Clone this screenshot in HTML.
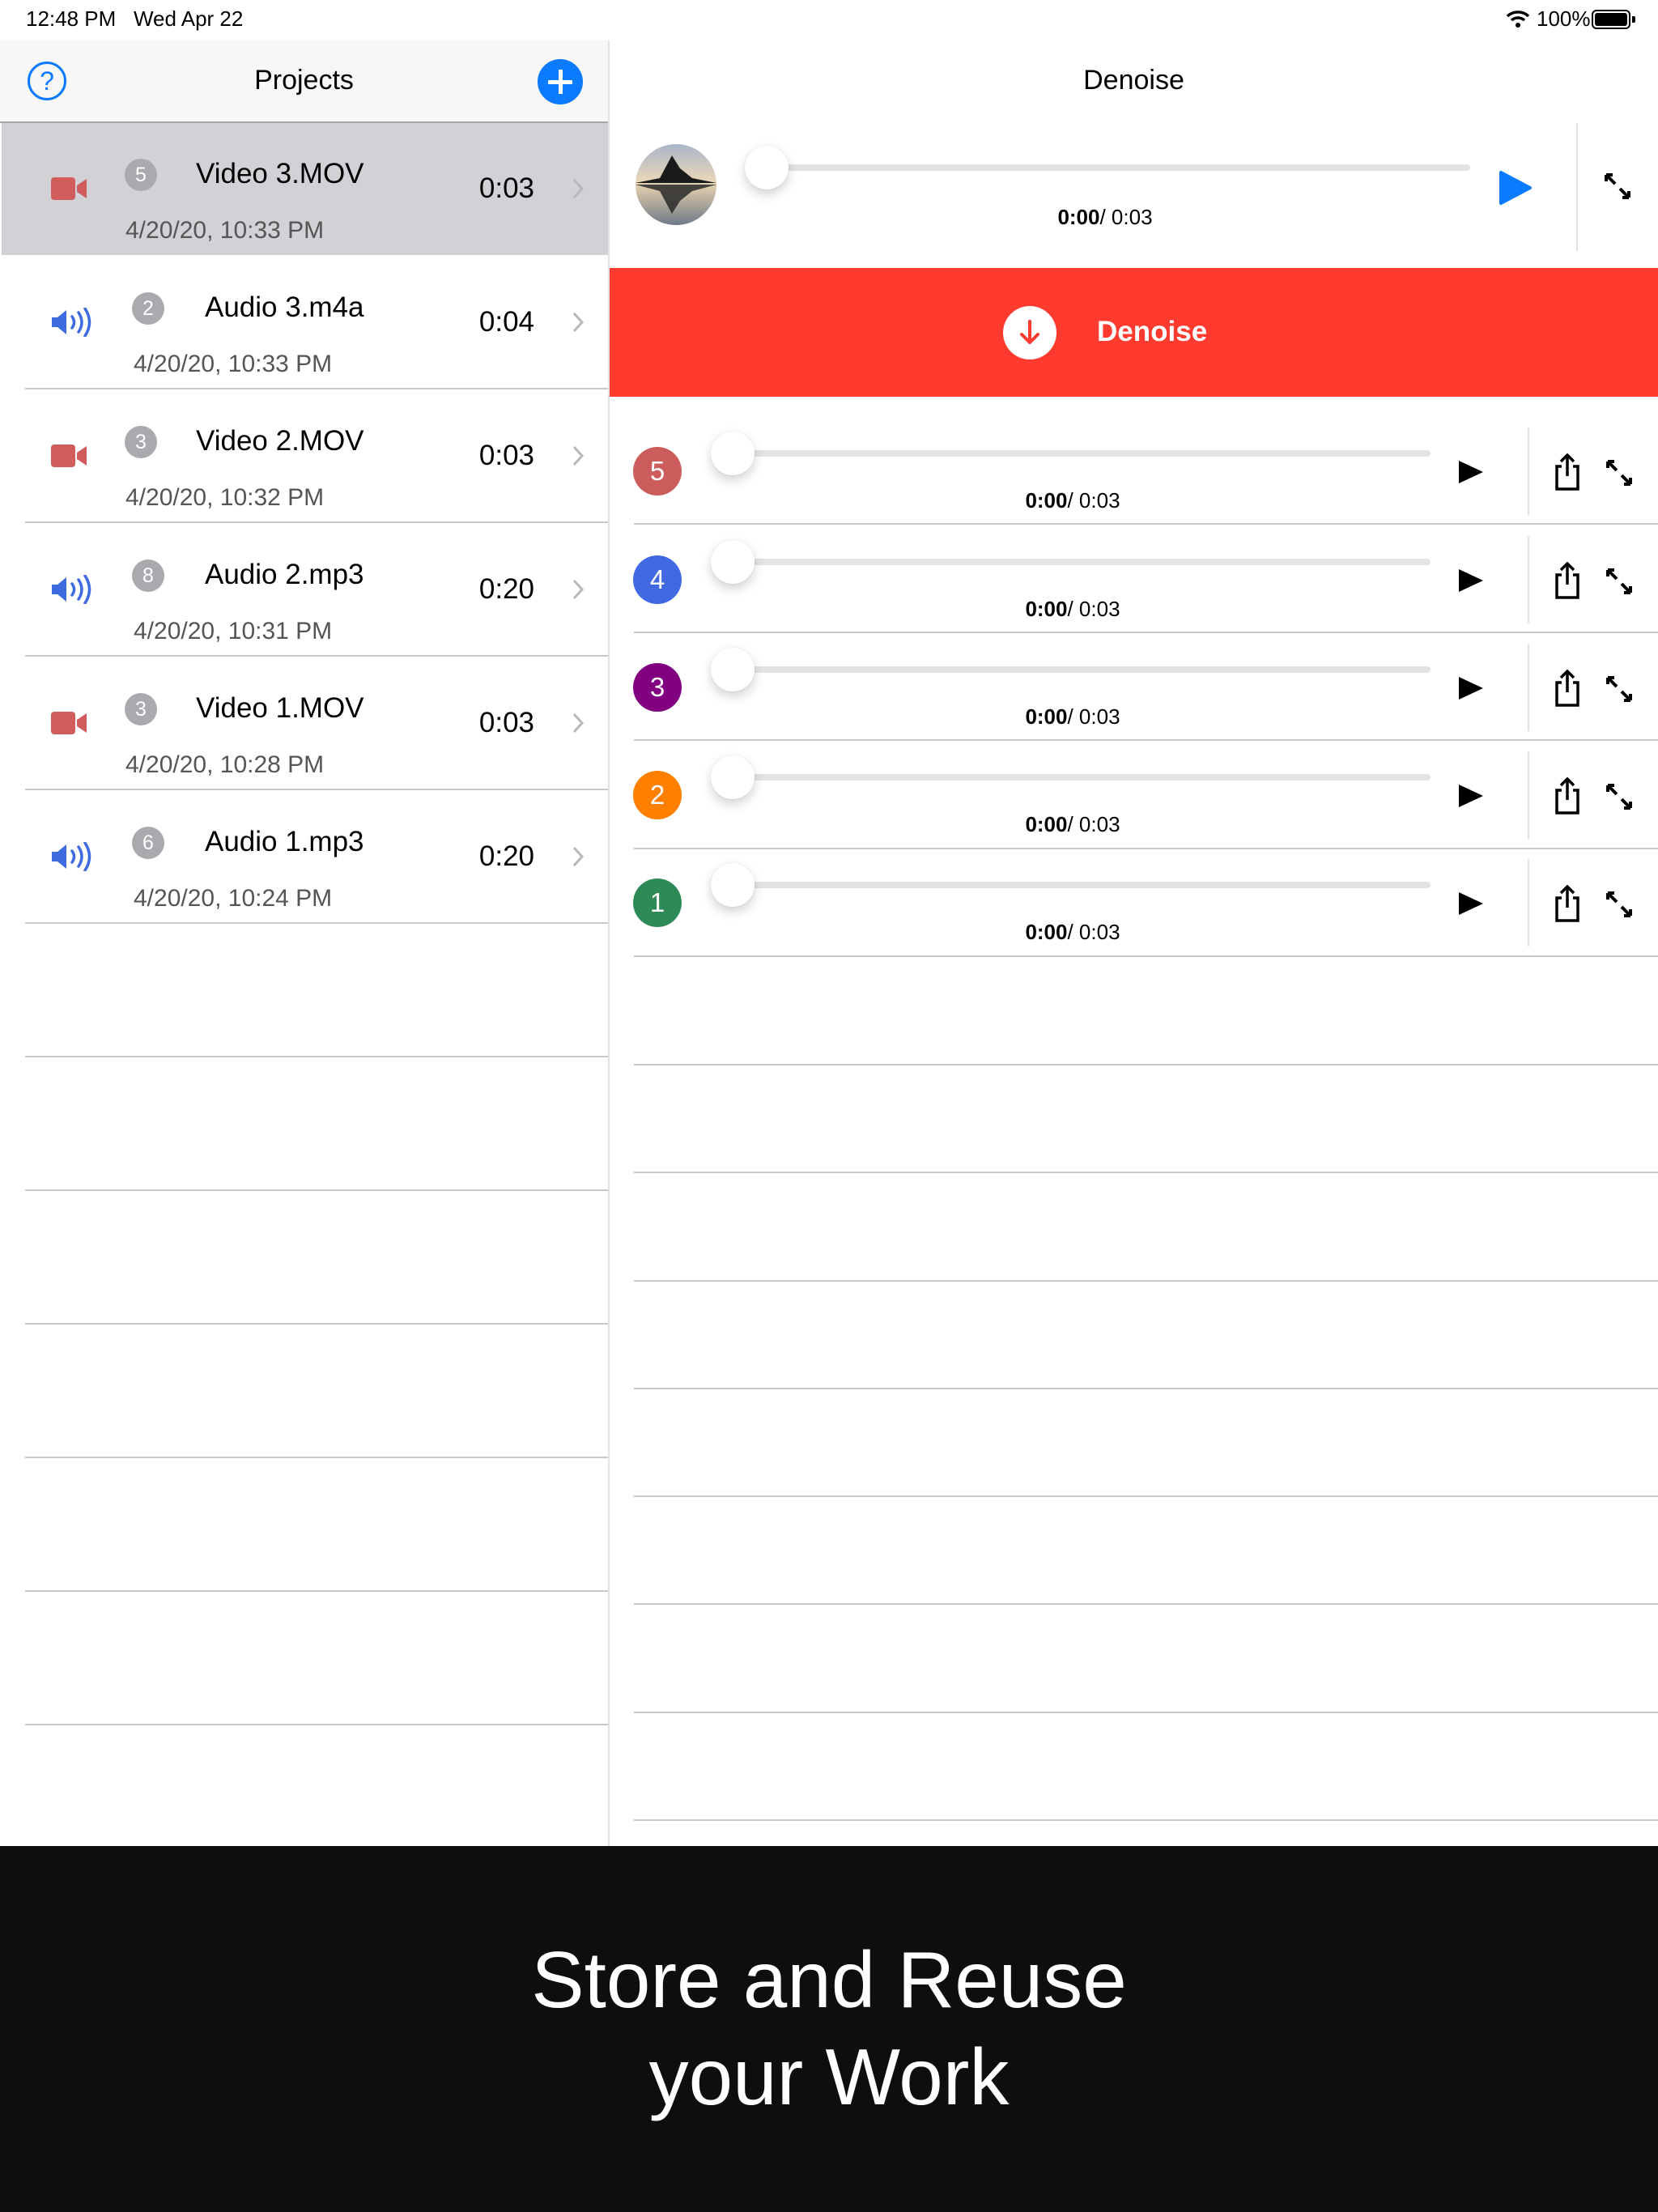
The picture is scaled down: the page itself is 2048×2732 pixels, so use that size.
<!DOCTYPE html>
<html><head><meta charset="utf-8"><style>
*{margin:0;padding:0;box-sizing:border-box}
body{width:2048px;height:2732px;position:relative;background:#fff;font-family:"Liberation Sans",sans-serif;overflow:hidden;color:#000}
.a{position:absolute}
.sep{position:absolute;height:2px;background:#c8c8cc}
.t{position:absolute;white-space:nowrap}
.badge{position:absolute;width:40px;height:40px;border-radius:50%;background:#a9a9ae;color:#fff;font-size:25px;text-align:center;line-height:40px}
.num{position:absolute;width:60px;height:60px;border-radius:50%;color:#fff;font-size:33px;text-align:center;line-height:60px}
.track{position:absolute;height:8px;background:#e3e3e6;border-radius:4px}
.knob{position:absolute;width:54px;height:54px;border-radius:50%;background:#fff;box-shadow:0 6px 14px rgba(0,0,0,.18),0 0 2px rgba(0,0,0,.08)}
</style></head><body>

<div class="t" style="left:32px;top:8px;font-size:26px">12:48 PM&nbsp;&nbsp;&nbsp;Wed Apr 22</div>
<div class="t" style="left:1898px;top:8px;font-size:26px">100%</div>
<svg class="a" style="left:1860px;top:12px" width="30" height="22" viewBox="0 0 30 22"><path d="M2 8 A19 19 0 0 1 28 8" stroke="#000" stroke-width="3.5" fill="none"/><path d="M7 13 A12 12 0 0 1 23 13" stroke="#000" stroke-width="3.5" fill="none"/><circle cx="15" cy="19" r="3" fill="#000"/></svg>
<div class="a" style="left:1966px;top:12px;width:48px;height:24px;border:2px solid #000;border-radius:6px;padding:2px"><div style="width:100%;height:100%;background:#000;border-radius:3px"></div></div>
<div class="a" style="left:2016px;top:20px;width:4px;height:8px;background:#000;border-radius:0 2px 2px 0"></div>

<div class="a" style="left:0;top:50px;width:751px;height:101px;background:#f7f7f7"></div>
<div class="a" style="left:751px;top:50px;width:2px;height:2230px;background:#e2e2e4"></div>
<div class="a" style="left:34px;top:76px;width:48px;height:48px;border:3px solid #0a7aff;border-radius:50%;color:#0a7aff;font-size:32px;text-align:center;line-height:42px">?</div>
<div class="t" style="left:0;width:751px;text-align:center;top:80px;font-size:34px">Projects</div>
<div class="a" style="left:664px;top:73px;width:56px;height:56px;border-radius:50%;background:#0a7aff"></div>
<div class="a" style="left:690px;top:86px;width:5px;height:30px;background:#fff"></div>
<div class="a" style="left:677px;top:99px;width:30px;height:5px;background:#fff"></div>
<div class="a" style="left:0;top:150px;width:751px;height:2px;background:#a5a5a8"></div>

<div class="a" style="left:2px;top:152px;width:749px;height:163px;background:#d1d1d6"></div>

<svg class="a" style="left:63px;top:219px" width="45" height="28" viewBox="0 0 45 28"><rect x="0" y="0" width="30" height="28" rx="4" fill="#d05c5c"/><path d="M32 10 L44 2 V26 L32 18Z" fill="#d05c5c"/></svg>
<div class="badge" style="left:154px;top:196px">5</div>
<div class="t" style="left:242px;top:195px;font-size:35px">Video 3.MOV</div>
<div class="t" style="left:560px;top:213px;width:100px;text-align:right;font-size:35px">0:03</div>
<div class="t" style="left:155px;top:268px;font-size:30px;color:#555">4/20/20, 10:33 PM</div>
<svg class="a" style="left:706px;top:220px" width="16" height="26"><path d="M3 2 L13 13 L3 24" stroke="#b7b7bb" stroke-width="3" fill="none"/></svg>

<svg class="a" style="left:62px;top:380px" width="56" height="36" viewBox="0 0 56 36"><path d="M2 12 H9 L20 3 V33 L9 24 H2Z" fill="#3f6be0"/><path d="M27 11 Q32 18 27 25" stroke="#3f6be0" stroke-width="3.5" fill="none" stroke-linecap="round"/><path d="M35 6 Q43 18 35 30" stroke="#3f6be0" stroke-width="3.5" fill="none" stroke-linecap="round"/><path d="M43 1 Q54 18 43 35" stroke="#3f6be0" stroke-width="3.5" fill="none" stroke-linecap="round"/></svg>
<div class="badge" style="left:163px;top:361px">2</div>
<div class="t" style="left:253px;top:360px;font-size:35px">Audio 3.m4a</div>
<div class="t" style="left:560px;top:378px;width:100px;text-align:right;font-size:35px">0:04</div>
<div class="t" style="left:165px;top:433px;font-size:30px;color:#555">4/20/20, 10:33 PM</div>
<svg class="a" style="left:706px;top:385px" width="16" height="26"><path d="M3 2 L13 13 L3 24" stroke="#b7b7bb" stroke-width="3" fill="none"/></svg>
<div class="sep" style="left:31px;top:479px;width:720px"></div>

<svg class="a" style="left:63px;top:549px" width="45" height="28" viewBox="0 0 45 28"><rect x="0" y="0" width="30" height="28" rx="4" fill="#d05c5c"/><path d="M32 10 L44 2 V26 L32 18Z" fill="#d05c5c"/></svg>
<div class="badge" style="left:154px;top:526px">3</div>
<div class="t" style="left:242px;top:525px;font-size:35px">Video 2.MOV</div>
<div class="t" style="left:560px;top:543px;width:100px;text-align:right;font-size:35px">0:03</div>
<div class="t" style="left:155px;top:598px;font-size:30px;color:#555">4/20/20, 10:32 PM</div>
<svg class="a" style="left:706px;top:550px" width="16" height="26"><path d="M3 2 L13 13 L3 24" stroke="#b7b7bb" stroke-width="3" fill="none"/></svg>
<div class="sep" style="left:31px;top:644px;width:720px"></div>

<svg class="a" style="left:62px;top:710px" width="56" height="36" viewBox="0 0 56 36"><path d="M2 12 H9 L20 3 V33 L9 24 H2Z" fill="#3f6be0"/><path d="M27 11 Q32 18 27 25" stroke="#3f6be0" stroke-width="3.5" fill="none" stroke-linecap="round"/><path d="M35 6 Q43 18 35 30" stroke="#3f6be0" stroke-width="3.5" fill="none" stroke-linecap="round"/><path d="M43 1 Q54 18 43 35" stroke="#3f6be0" stroke-width="3.5" fill="none" stroke-linecap="round"/></svg>
<div class="badge" style="left:163px;top:691px">8</div>
<div class="t" style="left:253px;top:690px;font-size:35px">Audio 2.mp3</div>
<div class="t" style="left:560px;top:708px;width:100px;text-align:right;font-size:35px">0:20</div>
<div class="t" style="left:165px;top:763px;font-size:30px;color:#555">4/20/20, 10:31 PM</div>
<svg class="a" style="left:706px;top:715px" width="16" height="26"><path d="M3 2 L13 13 L3 24" stroke="#b7b7bb" stroke-width="3" fill="none"/></svg>
<div class="sep" style="left:31px;top:809px;width:720px"></div>

<svg class="a" style="left:63px;top:879px" width="45" height="28" viewBox="0 0 45 28"><rect x="0" y="0" width="30" height="28" rx="4" fill="#d05c5c"/><path d="M32 10 L44 2 V26 L32 18Z" fill="#d05c5c"/></svg>
<div class="badge" style="left:154px;top:856px">3</div>
<div class="t" style="left:242px;top:855px;font-size:35px">Video 1.MOV</div>
<div class="t" style="left:560px;top:873px;width:100px;text-align:right;font-size:35px">0:03</div>
<div class="t" style="left:155px;top:928px;font-size:30px;color:#555">4/20/20, 10:28 PM</div>
<svg class="a" style="left:706px;top:880px" width="16" height="26"><path d="M3 2 L13 13 L3 24" stroke="#b7b7bb" stroke-width="3" fill="none"/></svg>
<div class="sep" style="left:31px;top:974px;width:720px"></div>

<svg class="a" style="left:62px;top:1040px" width="56" height="36" viewBox="0 0 56 36"><path d="M2 12 H9 L20 3 V33 L9 24 H2Z" fill="#3f6be0"/><path d="M27 11 Q32 18 27 25" stroke="#3f6be0" stroke-width="3.5" fill="none" stroke-linecap="round"/><path d="M35 6 Q43 18 35 30" stroke="#3f6be0" stroke-width="3.5" fill="none" stroke-linecap="round"/><path d="M43 1 Q54 18 43 35" stroke="#3f6be0" stroke-width="3.5" fill="none" stroke-linecap="round"/></svg>
<div class="badge" style="left:163px;top:1021px">6</div>
<div class="t" style="left:253px;top:1020px;font-size:35px">Audio 1.mp3</div>
<div class="t" style="left:560px;top:1038px;width:100px;text-align:right;font-size:35px">0:20</div>
<div class="t" style="left:165px;top:1093px;font-size:30px;color:#555">4/20/20, 10:24 PM</div>
<svg class="a" style="left:706px;top:1045px" width="16" height="26"><path d="M3 2 L13 13 L3 24" stroke="#b7b7bb" stroke-width="3" fill="none"/></svg>
<div class="sep" style="left:31px;top:1139px;width:720px"></div>

<div class="sep" style="left:31px;top:1304px;width:720px"></div>
<div class="sep" style="left:31px;top:1469px;width:720px"></div>
<div class="sep" style="left:31px;top:1634px;width:720px"></div>
<div class="sep" style="left:31px;top:1799px;width:720px"></div>
<div class="sep" style="left:31px;top:1964px;width:720px"></div>
<div class="sep" style="left:31px;top:2129px;width:720px"></div>

<div class="t" style="left:753px;width:1295px;text-align:center;top:80px;font-size:34px">Denoise</div>
<svg class="a" style="left:785px;top:178px" width="100" height="100" viewBox="0 0 100 100"><defs><clipPath id="c"><circle cx="50" cy="50" r="50"/></clipPath><linearGradient id="g" x1="0" y1="0" x2="0" y2="1"><stop offset="0" stop-color="#a9b6c8"/><stop offset=".45" stop-color="#e8d6b8"/><stop offset=".55" stop-color="#d9c7aa"/><stop offset="1" stop-color="#6f7a86"/></linearGradient></defs><g clip-path="url(#c)"><rect width="100" height="100" fill="url(#g)"/><path d="M0 48 L30 42 L45 14 L55 30 L70 42 L100 48 Z" fill="#1a1a1a"/><path d="M0 50 L30 58 L45 86 L55 70 L70 58 L100 50 Z" fill="#2a2a2a" opacity=".85"/></g></svg>
<div class="track" style="left:946px;top:203px;width:870px"></div>
<div class="knob" style="left:920px;top:180px"></div>
<div class="t" style="left:1190px;width:350px;text-align:center;top:253px;font-size:26px"><b>0:00</b>/ 0:03</div>
<svg class="a" style="left:1850px;top:210px" width="44" height="44"><path d="M4 3 L40 22 L4 41Z" fill="#0a7aff" stroke="#0a7aff" stroke-width="4" stroke-linejoin="round"/></svg>
<div class="a" style="left:1947px;top:152px;width:2px;height:158px;background:#e2e2e4"></div>
<svg class="a" style="left:1980px;top:212px" width="36" height="36" viewBox="0 0 36 36"><path d="M4 4 L15 15 M4 4 H12 M4 4 V12 M32 32 L21 21 M32 32 H24 M32 32 V24" stroke="#000" stroke-width="4" fill="none"/></svg>

<div class="a" style="left:753px;top:331px;width:1295px;height:159px;background:#ff3b30"></div>
<div class="a" style="left:1239px;top:378px;width:66px;height:66px;border-radius:50%;background:#fff"></div>
<svg class="a" style="left:1254px;top:393px" width="36" height="36" viewBox="0 0 36 36"><path d="M18 4 V30 M8 20 L18 30 L28 20" stroke="#ff3b30" stroke-width="4" fill="none" stroke-linecap="round" stroke-linejoin="round"/></svg>
<div class="t" style="left:1355px;top:390px;font-size:35px;color:#fff;font-weight:bold">Denoise</div>

<div class="num" style="left:782px;top:552px;background:#cd5c5c">5</div>
<div class="track" style="left:905px;top:556px;width:862px"></div>
<div class="knob" style="left:878px;top:533px"></div>
<div class="t" style="left:1150px;width:350px;text-align:center;top:603px;font-size:26px"><b>0:00</b>/ 0:03</div>
<svg class="a" style="left:1800px;top:567px" width="34" height="32"><path d="M2 2 L32 16 L2 30Z" fill="#000"/></svg>
<div class="a" style="left:1887px;top:528px;width:2px;height:108px;background:#e2e2e4"></div>
<svg class="a" style="left:1918px;top:560px" width="36" height="46" viewBox="0 0 36 46"><path d="M11 16 H5 V44 H31 V16 H25 M18 2 V28 M10 10 L18 2 L26 10" stroke="#000" stroke-width="3.5" fill="none"/></svg>
<svg class="a" style="left:1982px;top:566px" width="36" height="36" viewBox="0 0 36 36"><path d="M4 4 L15 15 M4 4 H12 M4 4 V12 M32 32 L21 21 M32 32 H24 M32 32 V24" stroke="#000" stroke-width="4" fill="none"/></svg>
<div class="sep" style="left:783px;top:646px;width:1265px"></div>

<div class="num" style="left:782px;top:686px;background:#4169e1">4</div>
<div class="track" style="left:905px;top:690px;width:862px"></div>
<div class="knob" style="left:878px;top:667px"></div>
<div class="t" style="left:1150px;width:350px;text-align:center;top:737px;font-size:26px"><b>0:00</b>/ 0:03</div>
<svg class="a" style="left:1800px;top:701px" width="34" height="32"><path d="M2 2 L32 16 L2 30Z" fill="#000"/></svg>
<div class="a" style="left:1887px;top:662px;width:2px;height:108px;background:#e2e2e4"></div>
<svg class="a" style="left:1918px;top:694px" width="36" height="46" viewBox="0 0 36 46"><path d="M11 16 H5 V44 H31 V16 H25 M18 2 V28 M10 10 L18 2 L26 10" stroke="#000" stroke-width="3.5" fill="none"/></svg>
<svg class="a" style="left:1982px;top:700px" width="36" height="36" viewBox="0 0 36 36"><path d="M4 4 L15 15 M4 4 H12 M4 4 V12 M32 32 L21 21 M32 32 H24 M32 32 V24" stroke="#000" stroke-width="4" fill="none"/></svg>
<div class="sep" style="left:783px;top:780px;width:1265px"></div>

<div class="num" style="left:782px;top:819px;background:#800080">3</div>
<div class="track" style="left:905px;top:823px;width:862px"></div>
<div class="knob" style="left:878px;top:800px"></div>
<div class="t" style="left:1150px;width:350px;text-align:center;top:870px;font-size:26px"><b>0:00</b>/ 0:03</div>
<svg class="a" style="left:1800px;top:834px" width="34" height="32"><path d="M2 2 L32 16 L2 30Z" fill="#000"/></svg>
<div class="a" style="left:1887px;top:795px;width:2px;height:108px;background:#e2e2e4"></div>
<svg class="a" style="left:1918px;top:827px" width="36" height="46" viewBox="0 0 36 46"><path d="M11 16 H5 V44 H31 V16 H25 M18 2 V28 M10 10 L18 2 L26 10" stroke="#000" stroke-width="3.5" fill="none"/></svg>
<svg class="a" style="left:1982px;top:833px" width="36" height="36" viewBox="0 0 36 36"><path d="M4 4 L15 15 M4 4 H12 M4 4 V12 M32 32 L21 21 M32 32 H24 M32 32 V24" stroke="#000" stroke-width="4" fill="none"/></svg>
<div class="sep" style="left:783px;top:913px;width:1265px"></div>

<div class="num" style="left:782px;top:952px;background:#ff8000">2</div>
<div class="track" style="left:905px;top:956px;width:862px"></div>
<div class="knob" style="left:878px;top:933px"></div>
<div class="t" style="left:1150px;width:350px;text-align:center;top:1003px;font-size:26px"><b>0:00</b>/ 0:03</div>
<svg class="a" style="left:1800px;top:967px" width="34" height="32"><path d="M2 2 L32 16 L2 30Z" fill="#000"/></svg>
<div class="a" style="left:1887px;top:928px;width:2px;height:108px;background:#e2e2e4"></div>
<svg class="a" style="left:1918px;top:960px" width="36" height="46" viewBox="0 0 36 46"><path d="M11 16 H5 V44 H31 V16 H25 M18 2 V28 M10 10 L18 2 L26 10" stroke="#000" stroke-width="3.5" fill="none"/></svg>
<svg class="a" style="left:1982px;top:966px" width="36" height="36" viewBox="0 0 36 36"><path d="M4 4 L15 15 M4 4 H12 M4 4 V12 M32 32 L21 21 M32 32 H24 M32 32 V24" stroke="#000" stroke-width="4" fill="none"/></svg>
<div class="sep" style="left:783px;top:1047px;width:1265px"></div>

<div class="num" style="left:782px;top:1085px;background:#2e8b57">1</div>
<div class="track" style="left:905px;top:1089px;width:862px"></div>
<div class="knob" style="left:878px;top:1066px"></div>
<div class="t" style="left:1150px;width:350px;text-align:center;top:1136px;font-size:26px"><b>0:00</b>/ 0:03</div>
<svg class="a" style="left:1800px;top:1100px" width="34" height="32"><path d="M2 2 L32 16 L2 30Z" fill="#000"/></svg>
<div class="a" style="left:1887px;top:1061px;width:2px;height:108px;background:#e2e2e4"></div>
<svg class="a" style="left:1918px;top:1093px" width="36" height="46" viewBox="0 0 36 46"><path d="M11 16 H5 V44 H31 V16 H25 M18 2 V28 M10 10 L18 2 L26 10" stroke="#000" stroke-width="3.5" fill="none"/></svg>
<svg class="a" style="left:1982px;top:1099px" width="36" height="36" viewBox="0 0 36 36"><path d="M4 4 L15 15 M4 4 H12 M4 4 V12 M32 32 L21 21 M32 32 H24 M32 32 V24" stroke="#000" stroke-width="4" fill="none"/></svg>
<div class="sep" style="left:783px;top:1180px;width:1265px"></div>

<div class="sep" style="left:783px;top:1314px;width:1265px"></div>
<div class="sep" style="left:783px;top:1447px;width:1265px"></div>
<div class="sep" style="left:783px;top:1581px;width:1265px"></div>
<div class="sep" style="left:783px;top:1714px;width:1265px"></div>
<div class="sep" style="left:783px;top:1847px;width:1265px"></div>
<div class="sep" style="left:783px;top:1980px;width:1265px"></div>
<div class="sep" style="left:783px;top:2114px;width:1265px"></div>
<div class="sep" style="left:783px;top:2247px;width:1265px"></div>

<div class="a" style="left:0;top:2280px;width:2048px;height:452px;background:#0e0e0e"></div>
<div class="t" style="left:0;width:2048px;text-align:center;top:2385px;font-size:98px;color:#fff;line-height:120px">Store and Reuse<br>your Work</div>
</body></html>
